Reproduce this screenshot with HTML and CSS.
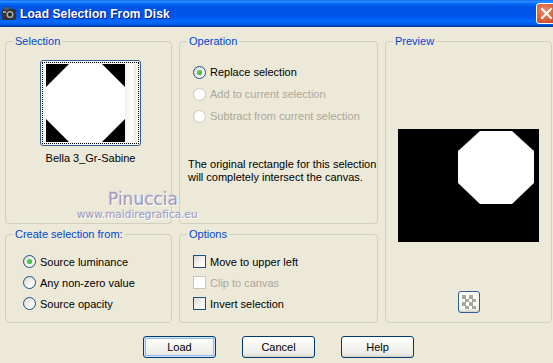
FILE: index.html
```html
<!DOCTYPE html>
<html lang="en">
<head>
    <meta charset="UTF-8">
    <title>Load Selection From Disk</title>
    <link rel="stylesheet" href="styles.css">
</head>
<body>
    <div class="window">
        <!-- Title bar -->
        <div class="titlebar">
            <svg class="app-icon" width="14" height="14" viewBox="0 0 14 14">
                <rect x="0" y="2" width="14" height="11" rx="2" fill="#333"/>
                <rect x="2" y="0" width="5" height="3" rx="1" fill="#555"/>
                <circle cx="8" cy="7.5" r="3.5" fill="#aaa"/>
                <circle cx="8" cy="7.5" r="2" fill="#222"/>
                <rect x="1" y="4" width="3" height="2" fill="#999"/>
            </svg>
            <span class="title">Load Selection From Disk</span>
            <div class="close-btn">
                <svg width="19" height="19" viewBox="0 0 19 19">
                    <path d="M5 5 L14 14 M14 5 L5 14" stroke="#fff" stroke-width="2" stroke-linecap="square"/>
                </svg>
            </div>
        </div>

        <!-- Dialog body -->
        <div class="dialog">
            <div class="groups">
                <fieldset class="group group-selection">
                    <legend>Selection</legend>
                    <div class="thumb-item">
                        <div class="thumb">
                            <div class="thumb-focus">
                                <svg width="79" height="78" viewBox="0 0 79 78">
                                    <rect width="79" height="78" fill="#000"/>
                                    <polygon points="23,0 56,0 79,23 79,55 56,78 23,78 0,55 0,23" fill="#fff"/>
                                </svg>
                                <div class="thumb-strip"></div>
                            </div>
                        </div>
                        <div class="thumb-name">Bella 3_Gr-Sabine</div>
                    </div>
                </fieldset>

                <fieldset class="group group-operation">
                    <legend>Operation</legend>
                    <div class="choice-list op-list">
                        <div class="choice"><span class="radio checked"></span>Replace selection</div>
                        <div class="choice disabled"><span class="radio"></span>Add to current selection</div>
                        <div class="choice disabled"><span class="radio"></span>Subtract from current selection</div>
                    </div>
                    <p class="op-note">The original rectangle for this selection<br>will completely intersect the canvas.</p>
                </fieldset>

                <fieldset class="group group-preview">
                    <legend>Preview</legend>
                    <div class="preview-box">
                        <svg width="141" height="113" viewBox="0 0 141 113">
                            <rect width="141" height="113" fill="#000"/>
                            <polygon points="82,2 114,2 136,22 136,54 114,75 82,75 60,54 60,22" fill="#fff"/>
                        </svg>
                    </div>
                    <div class="icon-btn">
                        <svg width="14" height="14" viewBox="0 0 14 14">
                            <rect width="14" height="14" fill="#fff"/>
                            <rect x="0" y="0" width="4" height="4" fill="#a9a79a"/>
                            <rect x="7" y="0" width="4" height="4" fill="#a9a79a"/>
                            <rect x="3" y="4" width="4" height="3" fill="#a9a79a"/>
                            <rect x="10" y="4" width="4" height="3" fill="#a9a79a"/>
                            <rect x="0" y="7" width="4" height="4" fill="#a9a79a"/>
                            <rect x="7" y="7" width="4" height="4" fill="#a9a79a"/>
                            <rect x="3" y="11" width="4" height="3" fill="#a9a79a"/>
                            <rect x="10" y="11" width="4" height="3" fill="#a9a79a"/>
                        </svg>
                    </div>
                </fieldset>

                <fieldset class="group group-create">
                    <legend>Create selection from:</legend>
                    <div class="choice-list bottom-list">
                        <div class="choice"><span class="radio checked"></span>Source luminance</div>
                        <div class="choice"><span class="radio"></span>Any non-zero value</div>
                        <div class="choice"><span class="radio"></span>Source opacity</div>
                    </div>
                </fieldset>

                <fieldset class="group group-options">
                    <legend>Options</legend>
                    <div class="choice-list bottom-list">
                        <div class="choice"><span class="check"></span>Move to upper left</div>
                        <div class="choice disabled"><span class="check"></span>Clip to canvas</div>
                        <div class="choice"><span class="check"></span>Invert selection</div>
                    </div>
                </fieldset>
            </div>

            <div class="buttons">
                <button class="btn default">Load</button>
                <button class="btn">Cancel</button>
                <button class="btn">Help</button>
            </div>

            <!-- Watermark over the dialog -->
            <div class="watermark">
                <span class="wm-name">Pinuccia</span>
                <span class="wm-url">www.maidiregrafica.eu</span>
            </div>
        </div>
    </div>
</body>
</html>
```

FILE: styles.css
```css
* {
    margin: 0;
    padding: 0;
    box-sizing: border-box;
}
:root {
    --face: #ECE9D8;
    --group-border: #D0D0BF;
    --legend-blue: #0046D5;
    --disabled: #ACA899;
    --control-border: #1C5180;
}
body {
    font-family: 'Liberation Sans', Arial, sans-serif;
    font-size: 11px;
    color: #000;
    background: var(--face);
    width: 553px;
    height: 363px;
    overflow: hidden;
}
/* Title bar */
.titlebar {
    height: 27px;
    display: flex;
    align-items: center;
    overflow: hidden;
    background: linear-gradient(to bottom, #0058EE 0%, #3593FF 4%, #288EFF 7%, #127DFF 10%, #036FFC 13%, #0262EE 18%, #0057E5 24%, #0054E3 30%, #0055EB 58%, #005BF5 68%, #026AFE 78%, #0062EF 87%, #0052D6 93%, #0040AB 97%, #003092 100%);
}
.app-icon {
    margin-left: 2px;
    flex-shrink: 0;
}
.title {
    margin-left: 4px;
    color: #fff;
    font-weight: bold;
    font-size: 12px;
    letter-spacing: 0.1px;
    text-shadow: 1px 1px 0 #0A1883;
    flex: 1;
}
.close-btn {
    width: 21px;
    height: 21px;
    margin-right: -4px;
    flex-shrink: 0;
    border: 1px solid #fff;
    border-radius: 3px;
    background: radial-gradient(circle at 40% 35%, #E98B6C 0%, #DD6440 50%, #C13D1A 100%);
    display: flex;
    align-items: center;
    justify-content: center;
}
/* Dialog */
.dialog {
    position: relative;
    padding: 7px 0 0 5px;
}
.groups {
    display: grid;
    grid-template-columns: 167px 199px 167px;
    grid-template-rows: 190px 96px;
    column-gap: 7px;
    row-gap: 3px;
}
.group {
    border: 1px solid var(--group-border);
    border-radius: 4px;
    padding: 0;
    margin: 0;
    min-width: 0;
}
.group legend {
    color: var(--legend-blue);
    margin-left: 7px;
    padding: 0 2px;
    line-height: 14px;
}
.group-selection { grid-column: 1; grid-row: 1; }
.group-operation { grid-column: 2; grid-row: 1; }
.group-preview { grid-column: 3; grid-row: 1 / 3; }
.group-create { grid-column: 1; grid-row: 2; }
.group-options { grid-column: 2; grid-row: 2; }
/* Selection thumbnail */
.thumb-item {
    width: 101px;
    margin: 12px 0 0 34px;
    display: flex;
    flex-direction: column;
    align-items: center;
}
.thumb {
    width: 101px;
    height: 86px;
    border: 1px solid #2F5D95;
    border-radius: 3px;
    padding: 1px;
    background: #F6F5F0;
}
.thumb-focus {
    height: 100%;
    border: 1px dotted #000;
    padding: 1px 2px 1px 3px;
    display: flex;
}
.thumb-focus svg {
    display: block;
}
.thumb-strip {
    width: 11px;
    height: 78px;
    background: linear-gradient(to right, #F2F1EC, #FFFFFF 60%, #E9E8E0);
}
.thumb-name {
    margin-top: 6px;
    line-height: 13px;
}
/* Radios and checkboxes */
.choice-list {
    display: flex;
    flex-direction: column;
}
.op-list {
    padding: 13px 0 0 13px;
}
.op-list .choice {
    height: 22px;
}
.bottom-list {
    padding: 10px 0 0 13px;
}
.bottom-list .choice {
    height: 21px;
}
.group-create .bottom-list {
    padding-left: 17px;
}
.choice {
    display: flex;
    align-items: center;
    gap: 4px;
    white-space: nowrap;
}
.choice.disabled {
    color: var(--disabled);
}
.radio {
    width: 13px;
    height: 13px;
    border-radius: 50%;
    border: 1px solid var(--control-border);
    background: linear-gradient(135deg, #DCDBD3 0%, #F4F3EE 55%, #FFFFFF 100%);
    display: flex;
    align-items: center;
    justify-content: center;
    flex-shrink: 0;
}
.radio.checked::after {
    content: "";
    width: 5px;
    height: 5px;
    border-radius: 50%;
    background: radial-gradient(circle at 35% 35%, #5DD85D, #21A121);
}
.check {
    width: 13px;
    height: 13px;
    border: 1px solid var(--control-border);
    background: linear-gradient(135deg, #DCDBD3 0%, #F4F3EE 55%, #FFFFFF 100%);
    flex-shrink: 0;
}
.disabled .radio,
.disabled .check {
    border-color: #CAC8BB;
    background: #fff;
}
.op-note {
    margin: 31px 0 0 8px;
    line-height: 13px;
}
/* Preview */
.group-preview {
    display: flex;
    flex-direction: column;
    align-items: center;
}
.preview-box {
    margin-top: 81px;
    width: 141px;
    height: 113px;
}
.preview-box svg {
    display: block;
}
.icon-btn {
    margin-top: 49px;
    width: 22px;
    height: 22px;
    border: 1px solid #2F5D95;
    border-radius: 3px;
    background: linear-gradient(to bottom, #FFFFFF, #F0F0EA 85%, #D6D0C5);
    display: flex;
    align-items: center;
    justify-content: center;
}
/* Buttons */
.buttons {
    display: flex;
    gap: 26px;
    margin: 13px 0 0 138px;
}
.btn {
    width: 73px;
    height: 22px;
    font-family: inherit;
    font-size: 11px;
    color: #000;
    border: 1px solid #003C74;
    border-radius: 3px;
    background: linear-gradient(to bottom, #FFFFFF 0%, #F4F4F0 50%, #ECEBE6 85%, #D6D0C5 100%);
}
.btn.default {
    box-shadow: inset 0 0 0 1px #CEE7FF, inset 0 0 0 2px #98B8EA;
}
/* Watermark */
.watermark {
    position: absolute;
    left: 77px;
    top: 163px;
    display: flex;
    flex-direction: column;
    color: #9E9CB6;
    text-shadow: 1px 1px 0 #fff, -1px -1px 0 #D8D6E4;
    font-family: 'DejaVu Sans', sans-serif;
    pointer-events: none;
}
.wm-name {
    margin-left: 31px;
    font-size: 17px;
    line-height: 18px;
}
.wm-url {
    font-size: 10.5px;
    line-height: 13px;
}
```
